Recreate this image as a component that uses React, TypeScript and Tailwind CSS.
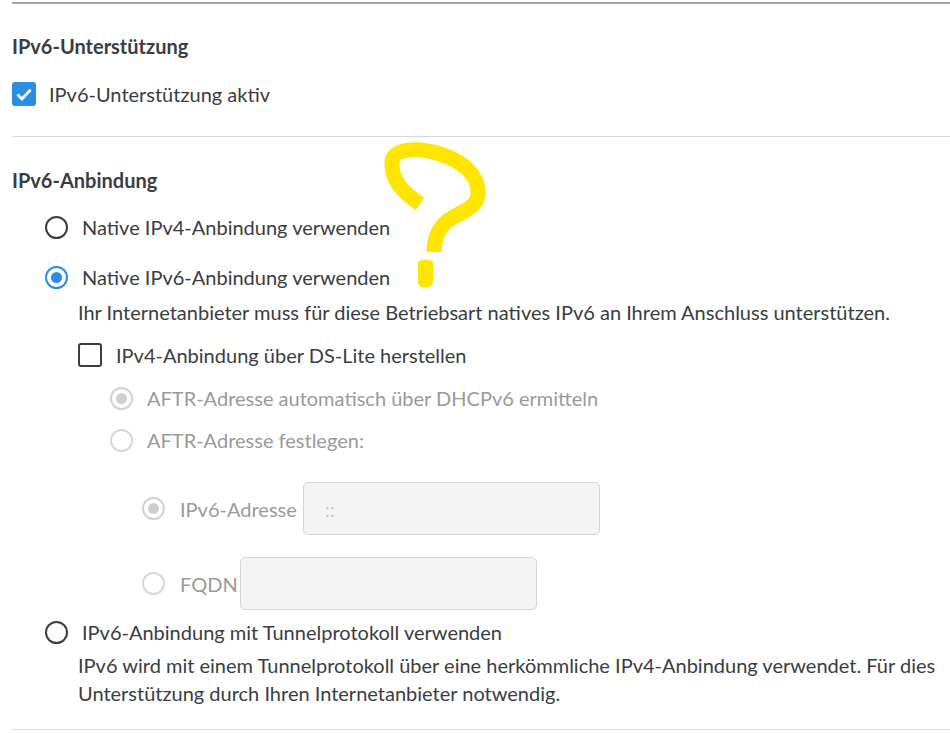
import React from "react";

const font = { fontFamily: '"Lato", "Open Sans", sans-serif' };

function Radio({ state }: { state: "off" | "on" | "disabledOn" | "disabledOff" }) {
  if (state === "on")
    return (
      <span className="flex h-[23px] w-[23px] shrink-0 items-center justify-center rounded-full border-2 border-[#2b8de4]">
        <span className="h-[11px] w-[11px] rounded-full bg-[#2b8de4]" />
      </span>
    );
  if (state === "off")
    return <span className="block h-[23px] w-[23px] shrink-0 rounded-full border-2 border-[#3a3d42]" />;
  if (state === "disabledOn")
    return (
      <span className="flex h-[23px] w-[23px] shrink-0 items-center justify-center rounded-full border-2 border-[#d2d2d2]">
        <span className="h-[11px] w-[11px] rounded-full bg-[#cfcfcf]" />
      </span>
    );
  return <span className="block h-[23px] w-[23px] shrink-0 rounded-full border-2 border-[#d8d8d8]" />;
}

export default function App() {
  return (
    <div className="relative h-[733px] w-[950px] overflow-hidden bg-white text-[20px] text-[#3a3d42]" style={font}>
      <div className="pl-[12px]">
        <div className="mt-[2px] h-[2px] bg-[#a3a8a6]" />
        <div className="mt-[30px] h-[24px] font-bold leading-[24px]">IPv6-Unterstützung</div>
        <div className="mt-[24px] flex h-[24px] items-center">
          <span className="flex h-[24px] w-[24px] items-center justify-center rounded-[3px] bg-[#2b8de4]">
            <svg width="16" height="13" viewBox="0 0 16 13">
              <path d="M1.5 6.5 L6 11 L14.5 1.8" fill="none" stroke="white" strokeWidth="2.8" />
            </svg>
          </span>
          <span className="ml-[13px] leading-[24px]">IPv6-Unterstützung aktiv</span>
        </div>
        <div className="mt-[30px] h-px bg-[#d9d9d9]" />
        <div className="mt-[31px] h-[24px] font-bold leading-[24px]">IPv6-Anbindung</div>

        <div className="mt-[23px] flex h-[24px] items-center pl-[33px]">
          <Radio state="off" />
          <span className="ml-[14px] leading-[24px]">Native IPv4-Anbindung verwenden</span>
        </div>
        <div className="mt-[26px] flex h-[24px] items-center pl-[33px]">
          <Radio state="on" />
          <span className="ml-[14px] leading-[24px]">Native IPv6-Anbindung verwenden</span>
        </div>
        <div className="mt-[11px] whitespace-nowrap pl-[66px] leading-[24px]">
          Ihr Internetanbieter muss für diese Betriebsart natives IPv6 an Ihrem Anschluss unterstützen.
        </div>
        <div className="mt-[19px] flex h-[24px] items-center pl-[66px]">
          <span className="block h-[24px] w-[24px] rounded-[3px] border-2 border-[#3a3d42]" />
          <span className="ml-[14px] leading-[24px]">IPv4-Anbindung über DS-Lite herstellen</span>
        </div>
        <div className="mt-[19px] flex h-[24px] items-center pl-[98px] text-[#9a9a9a]">
          <Radio state="disabledOn" />
          <span className="ml-[14px] leading-[24px]">AFTR-Adresse automatisch über DHCPv6 ermitteln</span>
        </div>
        <div className="mt-[18px] flex h-[24px] items-center pl-[98px] text-[#9a9a9a]">
          <Radio state="disabledOff" />
          <span className="ml-[14px] leading-[24px]">AFTR-Adresse festlegen:</span>
        </div>
        <div className="mt-[30px] flex h-[53px] items-center pl-[130px] text-[#9a9a9a]">
          <Radio state="disabledOn" />
          <span className="ml-[15px] leading-[24px]">IPv6-Adresse</span>
          <div className="ml-[6px] flex h-[53px] w-[297px] items-center rounded-[5px] border border-[#d6d6d6] bg-[#f4f4f4] pl-[21px] text-[#c8c8c8]">
            ::
          </div>
        </div>
        <div className="mt-[22px] flex h-[53px] items-center pl-[130px] text-[#9a9a9a]">
          <Radio state="disabledOff" />
          <span className="ml-[15px] leading-[24px]">FQDN</span>
          <div className="ml-[2px] h-[53px] w-[297px] rounded-[5px] border border-[#d6d6d6] bg-[#f4f4f4]" />
        </div>
        <div className="mt-[10px] flex h-[24px] items-center pl-[33px]">
          <Radio state="off" />
          <span className="ml-[14px] whitespace-nowrap leading-[24px]">IPv6-Anbindung mit Tunnelprotokoll verwenden</span>
        </div>
        <div className="mt-[7px] pl-[66px] leading-[28px]">
          <div className="whitespace-nowrap">
            IPv6 wird mit einem Tunnelprotokoll über eine herkömmliche IPv4-Anbindung verwendet. Für dies
          </div>
          <div className="whitespace-nowrap">Unterstützung durch Ihren Internetanbieter notwendig.</div>
        </div>
        <div className="mt-[22px] h-px bg-[#d9d9d9]" />
      </div>

      <svg className="absolute left-0 top-0" width="950" height="733" viewBox="0 0 950 733" pointerEvents="none">
        <path
          d="M420 204 C 404 193, 391 181, 392 162 C 393 148, 418 147, 440 154 C 463 161, 480 176, 478 196 C 475 210, 457 213, 446 222 C 437 230, 434 241, 434 252"
          fill="none"
          stroke="#ffe500"
          strokeWidth="15"
          strokeLinejoin="round"
        />
        <path d="M418 262 C 422 259, 430 259, 433 262 L 433 283 C 430 289, 421 289, 418 284 Z" fill="#ffe500" />
      </svg>
    </div>
  );
}
